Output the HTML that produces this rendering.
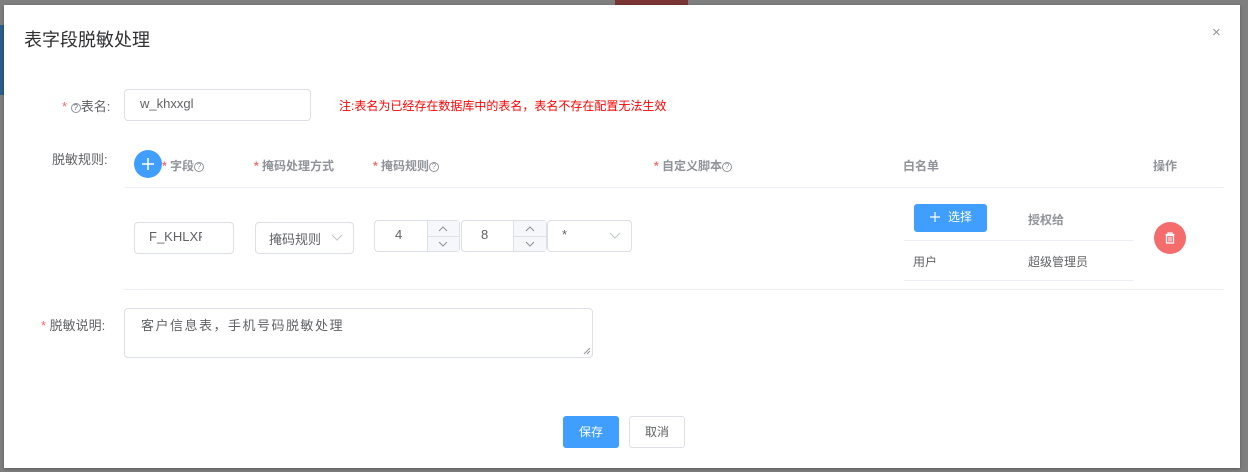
<!DOCTYPE html>
<html><head><meta charset="utf-8"><style>
*{box-sizing:border-box;margin:0;padding:0}
body{width:1248px;height:472px;background:#7f7f7f;position:relative;overflow:hidden;font-family:"Liberation Sans","Noto Sans CJK SC",sans-serif;font-size:13px;color:#606266}
.a{position:absolute;white-space:nowrap}
.dlg{position:absolute;left:4px;top:5px;width:1236px;height:463px;background:#fff;box-shadow:0 1px 3px rgba(0,0,0,.3)}
.box{position:absolute;border:1px solid #dcdfe6;border-radius:4px;background:#fff}
.st{color:#f56c6c}
.h{font-size:12px;font-weight:bold;color:#909399;top:157px}
.ln{position:absolute;height:1px;background:#ebeef5}
.q{display:inline-block;width:10px;height:10px;border:1px solid #909399;border-radius:50%;font-size:8px;line-height:8px;text-align:center;font-weight:normal;vertical-align:1px}
svg{position:absolute}
</style></head><body>
<div class="a" style="left:615px;top:0;width:73px;height:5px;background:#7a3434"></div>
<div class="a" style="left:0;top:25px;width:4px;height:70px;background:#2c5d8a"></div>
<div class="dlg"></div>
<div class="a" style="left:24px;top:26px;font-size:18px;color:#303133">表字段脱敏处理</div>
<div class="a" style="left:1212px;top:24px;font-size:15px;color:#909399">×</div>

<div class="a" style="left:62px;top:96px"><span class="st">*</span> <span class="q">?</span>表名:</div>
<div class="box" style="left:124px;top:89px;width:187px;height:32px"></div>
<div class="a" style="left:140px;top:96px;color:#606266">w_khxxgl</div>
<div class="a" style="left:339px;top:97px;font-size:12px;color:#f00">注:表名为已经存在数据库中的表名，表名不存在配置无法生效</div>

<div class="a" style="left:52px;top:149px">脱敏规则:</div>
<div class="a" style="left:134px;top:150px;width:28px;height:28px;border-radius:50%;background:#409eff"><svg width="28" height="28" style="left:0;top:0"><path d="M14 8v12M8 14h12" stroke="#fff" stroke-width="1.5"/></svg></div>
<div class="a h" style="left:162px"><span class="st">*</span> 字段<span class="q">?</span></div>
<div class="a h" style="left:254px"><span class="st">*</span> 掩码处理方式</div>
<div class="a h" style="left:373px"><span class="st">*</span> 掩码规则<span class="q">?</span></div>
<div class="a h" style="left:654px"><span class="st">*</span> 自定义脚本<span class="q">?</span></div>
<div class="a h" style="left:903px">白名单</div>
<div class="a h" style="left:1153px">操作</div>
<div class="ln" style="left:124px;top:187px;width:1100px"></div>

<div class="box" style="left:134px;top:222px;width:100px;height:32px"></div>
<div class="a" style="left:149px;top:229px;width:53px;overflow:hidden">F_KHLXF</div>
<div class="box" style="left:255px;top:222px;width:99px;height:32px"></div>
<div class="a" style="left:269px;top:229px">掩码规则</div>
<svg width="12" height="8" style="left:331px;top:234px"><path d="M1 1l5 5 5-5" fill="none" stroke="#c0c4cc"/></svg>
<div class="box" style="left:374px;top:220px;width:86px;height:32px"></div>
<div class="a" style="left:427px;top:221px;width:32px;height:30px;background:#f5f7fa;border-left:1px solid #dcdfe6"></div>
<div class="a" style="left:427px;top:236px;width:32px;height:1px;background:#dcdfe6"></div>
<div class="a" style="left:395px;top:227px">4</div>
<svg width="10" height="6" style="left:438px;top:226px"><path d="M1 5l4-4 4 4" fill="none" stroke="#909399"/></svg>
<svg width="10" height="6" style="left:438px;top:241px"><path d="M1 1l4 4 4-4" fill="none" stroke="#909399"/></svg>
<div class="box" style="left:461px;top:220px;width:86px;height:32px"></div>
<div class="a" style="left:513px;top:221px;width:33px;height:30px;background:#f5f7fa;border-left:1px solid #dcdfe6"></div>
<div class="a" style="left:513px;top:236px;width:33px;height:1px;background:#dcdfe6"></div>
<div class="a" style="left:481px;top:227px">8</div>
<svg width="10" height="6" style="left:525px;top:226px"><path d="M1 5l4-4 4 4" fill="none" stroke="#909399"/></svg>
<svg width="10" height="6" style="left:525px;top:241px"><path d="M1 1l4 4 4-4" fill="none" stroke="#909399"/></svg>
<div class="box" style="left:547px;top:220px;width:85px;height:32px"></div>
<div class="a" style="left:562px;top:227px">*</div>
<svg width="12" height="8" style="left:609px;top:232px"><path d="M1 1l5 5 5-5" fill="none" stroke="#c0c4cc"/></svg>

<div class="a" style="left:914px;top:204px;width:73px;height:28px;background:#409eff;border-radius:3px;color:#fff;font-size:12px;line-height:27px;padding-left:34px">选择</div>
<svg width="10" height="10" style="left:930px;top:212px"><path d="M5 0v10M0 5h10" stroke="#fff" stroke-width="1.2"/></svg>
<div class="a" style="left:1028px;top:211px;font-size:12px;font-weight:bold;color:#909399">授权给</div>
<div class="ln" style="left:904px;top:240px;width:230px"></div>
<div class="a" style="left:913px;top:253px;font-size:12px">用户</div>
<div class="a" style="left:1028px;top:253px;font-size:12px">超级管理员</div>
<div class="ln" style="left:904px;top:280px;width:230px"></div>
<div class="a" style="left:1154px;top:222px;width:32px;height:32px;border-radius:50%;background:#f56c6c">
<svg width="32" height="32" style="left:0;top:0" viewBox="0 0 32 32"><path d="M11.5 12.5h9M14 12.5v-1.5h4v1.5M12.5 13.5h7v7.5h-7z" fill="none" stroke="#fff" stroke-width="1.3"/><path d="M15 15v4.5M17 15v4.5" stroke="#fff" stroke-width="1"/></svg></div>
<div class="ln" style="left:124px;top:289px;width:1100px"></div>

<div class="a" style="left:41px;top:315px"><span class="st">*</span> 脱敏说明:</div>
<div class="box" style="left:124px;top:308px;width:469px;height:50px"></div>
<div class="a" style="left:141px;top:315px;letter-spacing:1.5px">客户信息表，手机号码脱敏处理</div>
<svg width="8" height="8" style="left:583px;top:347px"><path d="M7 1L1 7M7 4L4 7" stroke="#909399"/></svg>

<div class="a" style="left:563px;top:416px;width:56px;height:32px;background:#409eff;border-radius:3px;color:#fff;font-size:12px;text-align:center;line-height:32px">保存</div>
<div class="a" style="left:629px;top:416px;width:56px;height:32px;border:1px solid #dcdfe6;border-radius:3px;font-size:12px;text-align:center;line-height:30px">取消</div>
</body></html>
